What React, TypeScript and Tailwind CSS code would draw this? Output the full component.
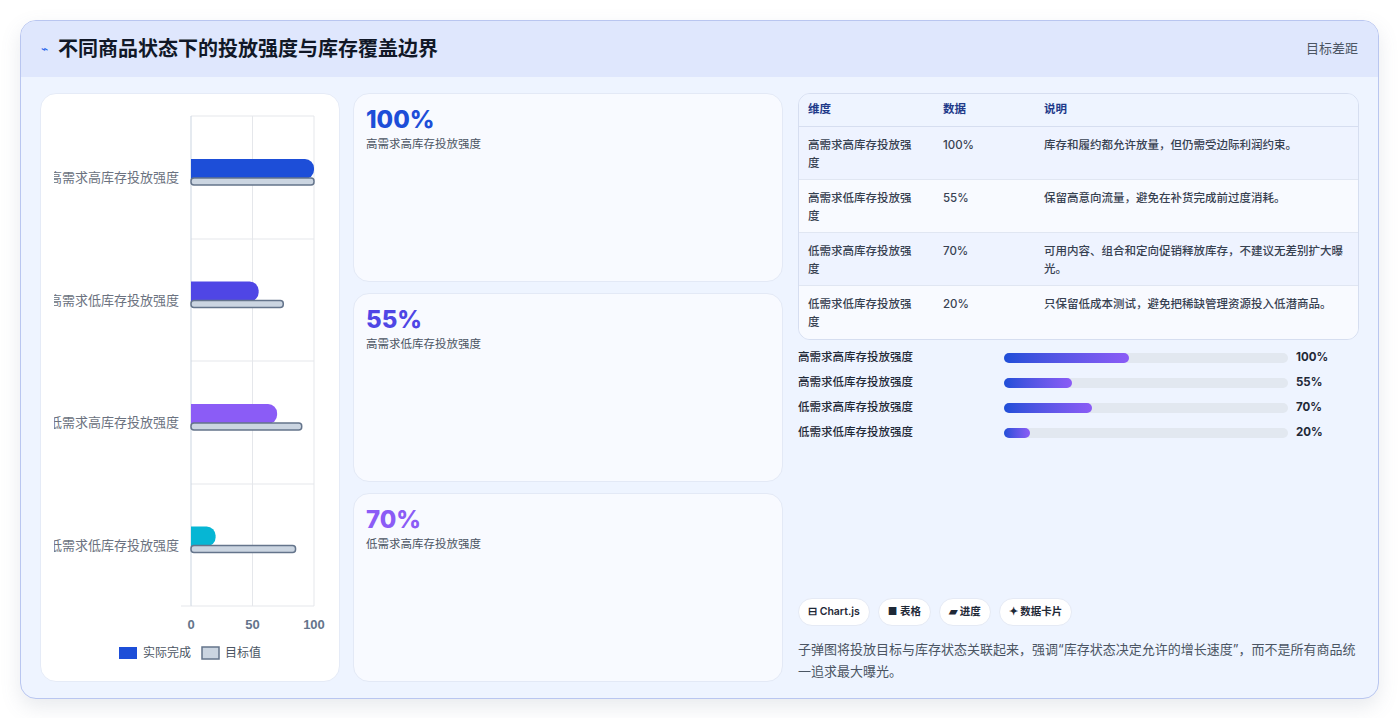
import React from "react";

const cats = [
  { n: "高需求高库存投放强度", v: 100, t: 100, c: "#1d4ed8" },
  { n: "高需求低库存投放强度", v: 55, t: 75, c: "#4f46e5" },
  { n: "低需求高库存投放强度", v: 70, t: 90, c: "#8b5cf6" },
  { n: "低需求低库存投放强度", v: 20, t: 85, c: "#06b6d4" },
];
const rows = [
  ["高需求高库存投放强度", "100%", "库存和履约都允许放量，但仍需受边际利润约束。"],
  ["高需求低库存投放强度", "55%", "保留高意向流量，避免在补货完成前过度消耗。"],
  ["低需求高库存投放强度", "70%", "可用内容、组合和定向促销释放库存，不建议无差别扩大曝光。"],
  ["低需求低库存投放强度", "20%", "只保留低成本测试，避免把稀缺管理资源投入低潜商品。"],
];
const bars = [
  ["高需求高库存投放强度", 44, "100%"],
  ["高需求低库存投放强度", 24, "55%"],
  ["低需求高库存投放强度", 31, "70%"],
  ["低需求低库存投放强度", 9, "20%"],
] as const;

function Chart() {
  const x0 = 150, x1 = 273;
  const sx = (v: number) => x0 + ((x1 - x0) * v) / 100;
  return (
    <svg width="300" height="587" viewBox="0 0 300 587" style={{ fontFamily: "'Noto Sans CJK SC', sans-serif" }}>
      <clipPath id="cl"><rect x="13" y="0" width="290" height="587" /></clipPath>
      {[22, 145, 267, 390, 512].map((y) => (
        <line key={y} x1={x0} x2={x1} y1={y} y2={y} stroke="#e5e7eb" />
      ))}
      {[0, 50, 100].map((v) => (
        <line key={v} x1={sx(v)} x2={sx(v)} y1={22} y2={512} stroke={v === 0 ? "#cbd5e1" : "#e5e7eb"} />
      ))}
      <line x1={x0 - 10} x2={x0} y1={512} y2={512} stroke="#e5e7eb" />
      {cats.map((c, i) => {
        const cy = 83 + i * 122.5;
        return (
          <g key={i}>
            <text x={138} y={cy + 5} textAnchor="end" fontSize="13" fill="#6b7280" clipPath="url(#cl)">{c.n}</text>
            <path d={`M${x0} ${cy - 18} H${sx(c.v) - 9} a9 9 0 0 1 9 9 v2 a9 9 0 0 1 -9 9 H${x0} Z`} fill={c.c} />
            <rect x={x0} y={cy + 1} width={sx(c.t) - x0} height={7} rx={3} fill="#cbd5e1" stroke="#64748b" strokeWidth="1.5" />
          </g>
        );
      })}
      {[0, 50, 100].map((v) => (
        <text key={v} x={sx(v)} y={535} textAnchor="middle" fontSize="13" fontWeight="600" fill="#64748b" fontFamily="'Liberation Sans', sans-serif">{v}</text>
      ))}
      <rect x="78" y="553" width="18" height="12" fill="#1d4ed8" />
      <text x="102" y="563" fontSize="12" fill="#4b5563">实际完成</text>
      <rect x="161" y="553" width="17" height="12" fill="#cbd5e1" stroke="#64748b" strokeWidth="1.5" />
      <text x="184" y="563" fontSize="12" fill="#4b5563">目标值</text>
    </svg>
  );
}

export default function App() {
  return (
    <div className="w-[1399px] h-[718px] bg-white p-5" style={{ fontFamily: "Inter, 'Noto Sans CJK SC', sans-serif" }}>
      <div className="h-[679px] rounded-2xl border border-[#b9c6f0] bg-[#eef4ff] overflow-hidden shadow-[0_8px_20px_rgba(100,116,139,0.15)] flex flex-col">
        <div className="h-[56px] shrink-0 bg-[#dfe7fd] flex items-center justify-between px-5">
          <div className="flex items-center gap-2.5">
            <span className="text-[#2563eb] text-xs">⌁</span>
            <span className="text-[20px] font-bold text-[#111827]">不同商品状态下的投放强度与库存覆盖边界</span>
          </div>
          <span className="text-[13px] text-[#4b5563]">目标差距</span>
        </div>
        <div className="flex-1 flex gap-[13px] px-[19px] pt-[16px] pb-[18px]">
          <div className="w-[300px] shrink-0 rounded-2xl bg-white border border-[#e5ebf7] overflow-hidden">
            <Chart />
          </div>
          <div className="w-[430px] shrink-0 flex flex-col gap-[11px]">
            {[["100%", "高需求高库存投放强度", "text-[#1d4ed8]"], ["55%", "高需求低库存投放强度", "text-[#4f46e5]"], ["70%", "低需求高库存投放强度", "text-[#8b5cf6]"]].map(([v, l, c]) => (
              <div key={v} className="flex-1 rounded-2xl bg-[#f8faff] border border-[#e3e9f6] px-[12px] pt-[10px]">
                <div className={`text-[24px] font-extrabold leading-[32px] ${c}`}>{v}</div>
                <div className="text-[11.5px] text-[#4b5563]">{l}</div>
              </div>
            ))}
          </div>
          <div className="flex-1 flex flex-col pl-[2px]">
            <div className="rounded-xl border border-[#d6def0] overflow-hidden text-[11.5px]">
              <div className="flex h-[33px] items-center bg-[#eef4ff] border-b border-[#d6def0] font-semibold text-[#1e3a8a]">
                <div className="w-[144px] pl-[9px]">维度</div>
                <div className="w-[101px]">数据</div>
                <div className="flex-1">说明</div>
              </div>
              {rows.map((r, i) => (
                <div key={i} className={`flex h-[53px] pt-[9px] leading-[18px] font-medium text-[#374151] ${i % 2 === 0 ? "bg-[#eef3ff]" : "bg-[#f8faff]"} ${i < 3 ? "border-b border-[#e0e6f2]" : ""}`}>
                  <div className="w-[144px] pl-[9px] pr-[24px]">{r[0]}</div>
                  <div className="w-[101px]">{r[1]}</div>
                  <div className="flex-1 pr-2">{r[2]}</div>
                </div>
              ))}
            </div>
            <div className="mt-[10px] flex flex-col gap-[9px]">
              {bars.map(([n, w, p]) => (
                <div key={n} className="flex items-center h-[16px] text-[11.5px] font-medium text-[#1f2937]">
                  <div className="w-[206px]">{n}</div>
                  <div className="w-[284px] h-[10px] rounded-full bg-[#e2e8f0]">
                    <div className="h-full rounded-full bg-gradient-to-r from-[#1d4ed8] to-[#8b5cf6]" style={{ width: `${w}%` }} />
                  </div>
                  <div className="ml-[8px] font-bold">{p}</div>
                </div>
              ))}
            </div>
            <div className="mt-auto">
              <div className="flex gap-[8px] mb-[12px]">
                {["⊟ Chart.js", "■ 表格", "▰ 进度", "✦ 数据卡片"].map((t) => (
                  <span key={t} className="h-[28px] px-[9px] rounded-full bg-white border border-[#e5eaf5] text-[10.5px] font-semibold text-[#1f2937] flex items-center">{t}</span>
                ))}
              </div>
              <p className="text-[13px] leading-[22px] text-[#4b5563]">子弹图将投放目标与库存状态关联起来，强调“库存状态决定允许的增长速度”，而不是所有商品统一追求最大曝光。</p>
            </div>
          </div>
        </div>
      </div>
    </div>
  );
}
